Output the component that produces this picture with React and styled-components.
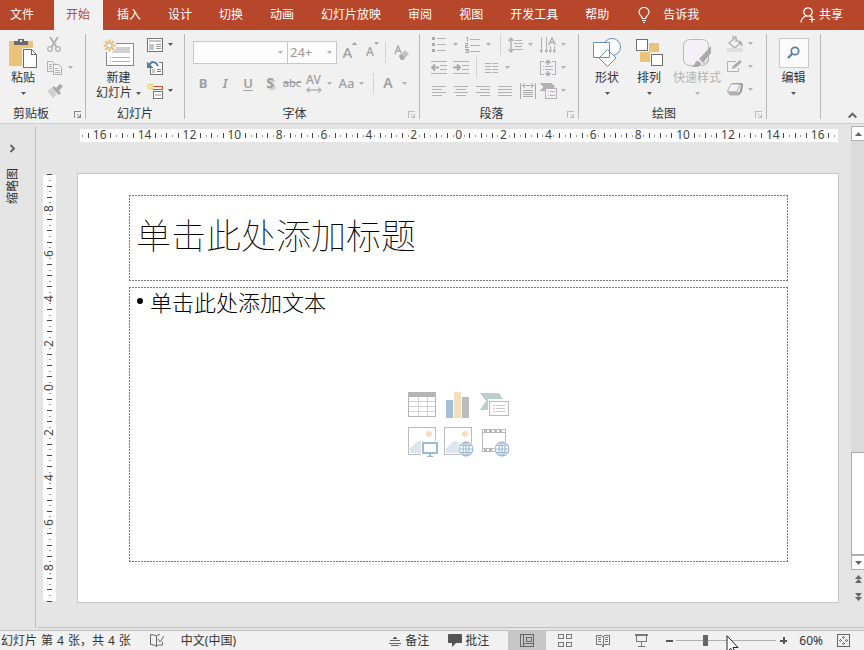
import React from "react";
import styled, { createGlobalStyle, css } from "styled-components";

const UI = `"Noto Sans", "Noto Sans CJK SC", sans-serif`;

const Global = createGlobalStyle`
  *, *::before, *::after { box-sizing: border-box; }
  body { margin: 0; background: #e5e5e5; font: 12px/16px ${UI}; color: #333; }
  button, input, select, textarea { font: inherit; color: inherit; margin: 0; }
  svg { display: block; flex: none; }
`;

const Window = styled.div`
  display: flex;
  flex-direction: column;
  height: 100vh;
  overflow: hidden;
`;

const PlainButton = styled.button`
  border: 0;
  padding: 0;
  background: none;
  white-space: nowrap;
`;

/* Tab strip */
const TabBar = styled.nav`
  display: flex;
  flex: none;
  height: 30px;
  background: #b7472a;
  color: #fff;
`;
const Tab = styled(PlainButton)`
  flex: none;
  padding: 0 14px 1px 13px;
  ${(p) => p.$file && css`padding: 0 20px 1px 10px;`}
  ${(p) => p.$active && css`
    padding: 0 13px 1px 12px;
    margin-right: 1px;
    background: #f1f1f1;
    color: #b7472a;
  `}
`;
const TabTool = styled(PlainButton)`
  display: flex;
  align-items: center;
  gap: ${(p) => p.$gap}px;
  margin-left: ${(p) => (p.$end ? "auto" : "15px")};
  margin-right: ${(p) => (p.$end ? "21px" : "0")};
`;

/* Ribbon */
const Ribbon = styled.div`
  display: flex;
  flex: none;
  height: 94px;
  border-bottom: 1px solid #d0d0d0;
  background: #f1f1f1;
`;
const Group = styled.section`
  position: relative;
  display: flex;
  flex-direction: column;
  flex: none;
  width: ${(p) => p.$w}px;
  padding-bottom: 1px;
  background: linear-gradient(#b9b9b9, #b9b9b9) right 4px / 1px 85px no-repeat;
`;
const GroupBody = styled.div`
  display: flex;
  flex: 1;
  padding-left: ${(p) => p.$pad || 0}px;
`;
const Caption = styled.div`
  height: 16px;
  text-align: center;
  padding-right: ${(p) => p.$shift || 16}px;
`;
const Launcher = styled(PlainButton)`
  position: absolute;
  right: 5px;
  bottom: 5px;
`;
const Big = styled(PlainButton)`
  display: flex;
  flex-direction: column;
  align-items: center;
  align-self: flex-start;
  width: ${(p) => p.$w}px;
  padding-top: 5px;
  color: ${(p) => (p.disabled ? "#b4b4b4" : "#333")};
`;
const BigIcon = styled.span`
  display: grid;
  place-items: center;
  height: 35px;
`;
const BigFoot = styled.span`
  display: flex;
  align-items: center;
  gap: 4px;
  height: 14px;
`;
const Rows = styled.div`
  display: flex;
  flex-direction: column;
  padding: ${(p) => p.$top || 3}px 0 0 ${(p) => p.$pad || 0}px;
`;
const Row = styled.div`
  display: flex;
  align-items: center;
  height: ${(p) => p.$h || 23}px;
`;
const Tool = styled(PlainButton)`
  display: flex;
  align-items: center;
  justify-content: ${(p) => (p.$left ? "flex-start" : "center")};
  gap: ${(p) => p.$gap || 5}px;
  width: ${(p) => p.$w}px;
  height: 22px;
  color: #a0a0a0;
`;
const Divider = styled.span`
  width: 1px;
  height: 21px;
  margin: 0 ${(p) => p.$r || 7}px 0 ${(p) => p.$l || 7}px;
  background: #d4d4d4;
`;
const Combo = styled.label`
  display: flex;
  position: relative;
  width: ${(p) => p.$w}px;
  height: 23px;
  & + & { margin-left: -1px; }
  svg { position: absolute; right: 5px; top: 10px; }
`;
const Select = styled.select`
  appearance: none;
  width: 100%;
  padding: 0 2px 1px;
  border: 1px solid #c6c6c6;
  border-radius: 0;
  background: #fdfdfd;
  color: #9a9a9a;
  font-size: 13px;
`;
const Glyph = styled.span`
  padding-bottom: 2px;
  font: ${(p) => p.$font || "600 13px/16px"} "Noto Sans", sans-serif;
  text-decoration: ${(p) => p.$deco || "none"};
  text-underline-offset: 2px;
  text-shadow: ${(p) => (p.$shadow ? "2px 2px 1px #c8c8c8" : "none")};
`;
const Stack = styled.span`
  display: flex;
  flex-direction: column;
  align-items: center;
`;
const Raised = styled.span`
  display: flex;
  align-items: flex-start;
`;
const SearchBox = styled.span`
  display: grid;
  place-items: center;
  width: 30px;
  height: 30px;
  border: 1px solid #c9c9c9;
  background: #fbfbfb;
`;
const Collapse = styled(PlainButton)`
  align-self: flex-end;
  margin: 0 7px 3px auto;
`;

/* Workspace */
const Workspace = styled.div`
  display: flex;
  flex: 1;
  min-height: 0;
  padding-top: 2px;
`;
const Thumbs = styled.aside`
  display: flex;
  flex-direction: column;
  align-items: center;
  flex: none;
  width: 36px;
  margin-bottom: 2px;
  padding: 18px 10px 0 0;
  border-right: 1px solid #bdbdbd;
`;
const SideText = styled.span`
  margin-top: 15px;
  writing-mode: vertical-rl;
  text-orientation: sideways;
  transform: rotate(180deg);
`;
const Editor = styled.main`
  display: flex;
  flex-direction: column;
  flex: 1;
  min-width: 0;
  margin: 0 0 2px 2px;
  padding: 3px 12px 24px 5px;
  border-bottom: 1px solid #c0c0c0;
`;
const HRuler = styled.div`
  display: flex;
  flex: none;
  height: 13px;
  margin: 0 1px 0 37px;
  background: #fff;
`;
const Stage = styled.div`
  display: flex;
  flex: 1;
  gap: 21px;
  min-height: 0;
  padding-top: 31px;
`;
const VRuler = styled.div`
  flex: none;
  width: 13px;
  margin: 2px 0;
  background: #fff;
`;
const VSlots = styled.div`
  display: flex;
  flex-direction: column;
  height: calc(100% + 6px);
  margin: -3px 0;
`;
const Slot = styled.span`
  display: flex;
  flex: 1 1 0;
  align-items: center;
  justify-content: center;
  min-width: 0;
  min-height: 0;
`;
const Tick = styled.i`
  flex: none;
  width: ${(p) => (p.$v ? (p.$small ? 2 : 5) : 1)}px;
  height: ${(p) => (p.$v ? 1 : p.$small ? 2 : 5)}px;
  background: ${(p) => (p.$small ? "#999" : "#444")};
`;
const Mark = styled.span`
  position: relative;
  z-index: 1;
  flex: none;
  padding-bottom: 2px;
  background: #fff;
  color: #444;
  line-height: 11px;
  transform: ${(p) => (p.$v ? "rotate(-90deg)" : "none")};
`;
const dash = (dir, pos, size) =>
  `repeating-linear-gradient(${dir}, #777 0 2px, transparent 2px 3px) ${pos} / ${size} no-repeat`;
const frame = [
  dash("90deg", "0 0", "100% 1px"),
  dash("90deg", "0 100%", "100% 1px"),
  dash("180deg", "0 0", "1px 100%"),
  dash("180deg", "100% 0", "1px 100%"),
].join(",");
const Slide = styled.article`
  display: flex;
  flex-direction: column;
  flex: 1;
  gap: 6px;
  min-width: 0;
  padding: 21px 50px 40px 51px;
  border: 1px solid #c6c6c6;
  background: #fff;
  color: #000;
`;
const Title = styled.h1`
  display: flex;
  align-items: center;
  flex: none;
  height: 86px;
  margin: 0;
  padding: 0 7px 8px;
  background: ${frame};
  font: 100 35px/48px "Noto Sans CJK SC", sans-serif;
`;
const Content = styled.div`
  display: grid;
  flex: 1;
  min-height: 0;
  background: ${frame};
`;
const Bullets = styled.ul`
  grid-area: 1 / 1;
  margin: 0;
  padding: 0 0 0 8px;
  list-style: none;
  font: 300 22px/28px "Noto Sans CJK SC", sans-serif;
`;
const Bullet = styled.li`
  display: flex;
  align-items: center;
  gap: 7px;
  &::before { content: ""; width: 6px; height: 6px; border-radius: 50%; background: #000; }
`;
const Inserts = styled.div`
  grid-area: 1 / 1;
  place-self: center;
  display: grid;
  grid-template-columns: repeat(3, 32px);
  gap: 5px 4px;
  padding-left: 2px;
`;

/* Scroll bar */
const Scroll = styled.div`
  display: flex;
  flex-direction: column;
  flex: none;
  width: 13px;
  margin-bottom: 2px;
  padding-bottom: 21px;
  border-bottom: 1px solid #c0c0c0;
`;
const ScrollButton = styled(PlainButton)`
  display: flex;
  align-items: center;
  justify-content: flex-end;
  flex: none;
  height: 15px;
  padding-right: 2px;
  border: 1px solid #b0b0b0;
  border-right: 0;
  background: #fff;
`;
const PageButton = styled(PlainButton)`
  display: flex;
  align-items: center;
  justify-content: flex-end;
  flex: none;
  height: 18px;
  padding-right: 2px;
`;
const Track = styled.div`
  display: flex;
  flex-direction: column;
  justify-content: flex-end;
  flex: 1;
  background: #dbdbdb;
`;
const Thumb = styled.div`
  height: 25%;
  border: 1px solid #ababab;
  border-right: 0;
  background: #fff;
`;

/* Status bar */
const Status = styled.footer`
  position: relative;
  display: flex;
  align-items: center;
  flex: none;
  height: 20px;
  padding: 0 14px 0 1px;
  border-top: 1px solid #c3c3c3;
  background: #f1f1f1;
  overflow: hidden;
`;
const Counter = styled.span`
  display: flex;
  gap: 4px;
`;
const Lang = styled.span`
  margin: 0 auto 0 19px;
`;
const StatusTool = styled(PlainButton)`
  display: flex;
  align-items: center;
  gap: ${(p) => p.$gap}px;
  margin-right: ${(p) => (p.$last ? 0 : 19)}px;
`;
const Views = styled.div`
  display: flex;
  margin: 0 6px 0 19px;
`;
const View = styled(PlainButton)`
  display: grid;
  place-items: center;
  width: 38px;
  height: 19px;
  background: ${(p) => (p.$on ? "#c6c6c6" : "none")};
`;
const Zoom = styled.input`
  appearance: none;
  width: 100px;
  height: 13px;
  margin: 0 4px 0 3px;
  background: linear-gradient(#b0b0b0, #b0b0b0) center / 100% 1px no-repeat;
  &::-webkit-slider-thumb {
    appearance: none;
    width: 5px;
    height: 11px;
    background: #666;
  }
`;
const Percent = styled.output`
  margin: 0 14px 0 12px;
`;
const Pointer = styled.span`
  position: absolute;
  right: 125px;
  top: 4px;
`;

/* Drawings */
const G = "#b2b2b2";
const D = "#6a6a6a";
const Svg = ({ w, h, c = G, f = "none", soft, children }) => (
  <svg width={w} height={h} viewBox={`0 0 ${w} ${h}`} fill={f} stroke={c}
    shapeRendering={soft ? "auto" : "crispEdges"} aria-hidden="true">{children}</svg>
);
const Down = ({ c = G }) => <Svg w={5} h={3} c="none" soft><path d="M0 0h5L2.5 3z" fill={c} /></Svg>;
const Dark = () => <Down c="#555" />;
const LaunchIcon = ({ c = "#bdbdbd" }) => (
  <Svg w={7} h={7} c={c}><path d="M.5 6.5v-6h6M3 3l3 3M6.5 3v3.500h-3.500" /></Svg>
);
const Bulb = () => (
  <Svg w={12} h={16} c="#fff" soft><path d="M4 11.500V10C2.500 8.500 1 7.500 1 5.200a5 4.700 0 0 1 10 0C11 7.500 9.500 8.500 8 10v1.500M4 11.500h4M4 13.500h4M5 15.500h2" strokeWidth="1.200" /></Svg>
);
const Share = () => (
  <Svg w={16} h={16} c="#fff" soft><circle cx="8" cy="5" r="4.200" strokeWidth="1.200" /><path d="M1 15.500c0-3 2-5 4.500-6.500M10.500 9l1 1M12 9.500v6M9 12.500h6" strokeWidth="1.200" /></Svg>
);
const Paste = () => (
  <Svg w={28} h={30} c="none">
    <path d="M0 3h24v25H0z" fill="#eac47a" /><path d="M5 7V3h4V1h6v2h4v4z" fill={D} /><path d="M11 2h2v2h-2z" fill="#f1f1f1" />
    <path d="M13 10h15v20H13z" fill="#f1f1f1" /><path d="M14.500 11.500h8l5 5v13h-13z" fill="#fff" stroke={D} /><path d="M22.500 11.500v5h5" stroke={D} />
  </Svg>
);
const Cut = () => (
  <Svg w={14} h={15} soft><path d="M3 0l6.500 10M11 0L4.500 10" strokeWidth="2" /><circle cx="3" cy="12" r="2.300" strokeWidth="1.300" /><circle cx="11" cy="12" r="2.300" strokeWidth="1.300" /></Svg>
);
const Copy = () => (
  <Svg w={15} h={14}><path d="M.5.5h5l2 2v8h-7zM2 3.500h3M2 5.500h3M2 7.500h3" /><path d="M6.500 3.500h5l3 3v7h-8z" fill="#f6f3f6" /><path d="M8 7.500h3M8 9.500h5M8 11.500h5" /></Svg>
);
const Brush = () => (
  <Svg w={16} h={14} c="none" soft><path d="M0 7l4-3 6 6-4 4z" fill="#cfcfcf" /><path d="M5 4l2-2 7 7-2 2zM9 4l4-4 3 2-4 5z" fill="#a9a9a9" /></Svg>
);
const Sun = ({ r = 6, x = 6, y = 6 }) => (
  <g stroke="#eac070" strokeWidth={r > 5 ? 2 : 1}><path shapeRendering="auto" d={`M${x} ${y - r}v${2 * r}M${x - r} ${y}h${2 * r}M${x - r * 0.7} ${y - r * 0.7}l${r * 1.4} ${r * 1.4}M${x + r * 0.7} ${y - r * 0.7}l${-r * 1.4} ${r * 1.4}`} /><circle cx={x} cy={y} r={r / 3} fill="#fff" stroke="none" /></g>
);
const NewSlide = () => (
  <Svg w={31} h={28}><rect x="3.500" y="4.500" width="27" height="22" rx="1" fill="#fff" stroke="#888" /><path d="M12 8h15v6H9z" fill="#d0d0d0" stroke="none" /><path d="M7 18.500h1M9 18.500h18M7 22.500h1M9 22.500h18" /><path d="M0 0h13v11H8l-2 2H0z" fill="#f1f1f1" stroke="none" /><Sun x={6.5} y={6.5} /></Svg>
);
const Layout = () => (
  <Svg w={16} h={14} c="#777"><path d="M.5.5h15v13H.5z" fill="#fff" /><path d="M2 2h12v2H2zM2 6h5v6H2z" fill="#c6c6c6" stroke="none" /><path d="M9 6.500h5M9 8.500h5M9 10.500h5" stroke="#999" /></Svg>
);
const Reset = () => (
  <Svg w={16} h={14} c="#777"><path d="M3.500 5.500V13.500h12V1.500H12" fill="#fff" /><path d="M5 8h3v4H5z" fill="#c6c6c6" stroke="none" /><path d="M10 8.500h4M10 10.500h4" /><path d="M11 5C9 0 4 0 2.500 4" stroke="#4f81ac" strokeWidth="2" shapeRendering="auto" /><path d="M0 1v6h6z" fill="#4f81ac" stroke="none" /></Svg>
);
const Section = () => (
  <Svg w={16} h={16} c="#777"><path d="M6 3.500h9.500v3H6" stroke="#c2533a" /><path d="M6.500 8.500h9v7h-9z" fill="#fff" /><path d="M8 11h6v2H8z" fill="#c6c6c6" stroke="none" /><Sun r={3.5} x={3.5} y={3.5} /></Svg>
);
const Eraser = () => (
  <Svg w={15} h={16} c="none" soft><path d="M1 9l3-8 3 7M2 6h4" stroke="#aaa" strokeWidth="1.500" /><path d="M5 11l6-6 4 4-6 6h-2z" fill="#c2c2c2" /><path d="M5 11l2-2 4 4-2 2H7z" fill="#aaa" /></Svg>
);
const Wide = () => <Svg w={16} h={6} soft><path d="M1 3h14M3.500.5L1 3l2.500 2.500M12.500.5L15 3l-2.500 2.500" strokeWidth="1.300" /></Svg>;
const Bulleted = () => <Svg w={14} h={15} c="none"><path d="M0 0h3v3H0zM0 6h3v3H0zM0 12h3v3H0z" fill="#aaa" /><path d="M5 1.500h9M5 7.500h9M5 13.500h9" stroke={G} /></Svg>;
const Numbered = () => (
  <Svg w={15} h={16}><path d="M1 .5h1v4M0 6.500h2.500v2H.5v2h3M0 12h3v3.500H0M1 13.500h2" stroke="#aaa" /><path d="M5 2.500h10M5 8.500h10M5 14.500h10" /></Svg>
);
const Spacing = () => <Svg w={15} h={16}><path d="M3 1v14M0.500 4L3 1l2.500 3M0.500 12L3 15l2.500-3" shapeRendering="auto" strokeWidth="1.500" /><path d="M7 3.500h7M6 6.500h9M7 9.500h7M6 12.500h9" /></Svg>;
const TextDir = () => <Svg w={16} h={16}><path d="M1.500 0v15M6.500 0v15M10.500 9v6M14.500 9v6M0 13l1.500 2L3 13M5 13l1.500 2L8 13M9 13l1.500 2 1.500-2M13 13l1.500 2 1-2" /><path d="M8.500 8L12 1l3.500 7M10 5.500h4" shapeRendering="auto" strokeWidth="1.500" /></Svg>;
const Indent = ({ right }) => (
  <Svg w={16} h={13}><path d="M0 .5h16M9 4.500h7M9 8.500h7M0 12.500h16" /><path d={right ? "M0 6.500h7M4 3.500l3 3-3 3" : "M1 6.500h7M4 3.500l-3 3 3 3"} strokeWidth="2" stroke="#aaa" shapeRendering="auto" /></Svg>
);
const Cols = () => <Svg w={13} h={10}><path d="M0 .5h6M7 .5h6M0 3.500h6M7 3.500h6M0 6.500h6M7 6.500h6M0 9.500h6M7 9.500h6" /></Svg>;
const AlignText = () => <Svg w={16} h={16}><path d="M4 1.500H.5v13H4M12 1.500h3.500v13H12" fill="#f6f0f8" /><path d="M3 6.500h1M5 6.500h8M3 9.500h1M5 9.500h8" /><path d="M8 0v5M5.500 3L8 .5 10.500 3M8 11v5M5.500 13L8 15.500l2.500-2.500" strokeWidth="1.500" stroke="#aaa" shapeRendering="auto" /></Svg>;
const Lines = ({ kind }) => {
  const d = {
    left: "M0 .5h14M0 3.500h10M0 6.500h14M0 9.500h10",
    center: "M0 .5h14M2 3.500h10M0 6.500h14M2 9.500h10",
    right: "M0 .5h14M4 3.500h10M0 6.500h14M4 9.500h10",
    justify: "M0 .5h14M0 3.500h14M0 6.500h14M0 9.500h14",
  }[kind];
  return <Svg w={14} h={10}><path d={d} /></Svg>;
};
const Distribute = () => <Svg w={16} h={16} c="#aaa"><path d="M.5 0v16M15.500 0v16M2 2.500h12M5 0L2.500 2.500 5 5M11 0l2.500 2.500L11 5M3 7.500h10M3 9.500h10M3 11.500h10M3 13.500h10" /></Svg>;
const SmartArt = () => <Svg w={17} h={16}><path d="M0 0h12l3 4-4 3-5 1-6 0 3-4z" fill={G} stroke="none" /><path d="M5.500 5.500h11v10h-11z" fill="#f6f0f8" /><path d="M8 8.500h1M10 8.500h5M8 12.500h1M10 12.500h5" /></Svg>;
const Shapes = () => <Svg w={30} h={30} c="#6b8fb3" soft><circle cx="20" cy="9" r="8.500" fill="#fff" /><path d="M1.500 4.500h16v15h-16zM15.500 11.500l8.500 8.500-8.500 8.500L7 20z" fill="#fff" /></Svg>;
const Arrange = () => <Svg w={27} h={27} c="#6e6e6e"><path d="M13 4h10v9h-9v10H4V13h9z" fill="#eac47a" stroke="none" /><path d="M.5.500h11v11H.5zM15.500 15.500h11v11h-11z" fill="#fff" /></Svg>;
const Quick = () => <Svg w={30} h={30} c="#aaa" soft><rect x="1.500" y="1.500" width="25" height="26" rx="6" fill="#f5f0f7" stroke="#b8b8b8" /><path d="M29 8v7l-8 10-4-4z" fill="#aaa" stroke="none" /><path d="M8 29c5-1 4-6 8-7l4 4c-2 4-7 4-12 3z" fill="#aaa" stroke="#f1f1f1" /><path d="M21 26q4-1 6-5" /></Svg>;
const Fill = () => <Svg w={16} h={16} soft><path d="M2 7l6-5 5 5-5 5zM6 4V0h3v6" strokeWidth="1.300" fill="none" /><path d="M12 5c3 0 4 2 3 6-1-2-2-3-3-3z" fill="#aaa" stroke="none" /><path d="M0 14h16" stroke="#e0e0e0" strokeWidth="4" /></Svg>;
const Outline = () => <Svg w={16} h={13} soft><path d="M9 1.500H.5v10h11V8" /><path d="M5 9l1-3 7-6 2 2-7 6z" fill="#aaa" stroke="none" /></Svg>;
const Effects = () => <Svg w={16} h={13} soft><path d="M5 1h9q1 0 1 1l-1 6-3 4" stroke="#999" strokeWidth="2" /><path d="M4 1h9l-3 8H1q-.8 0-.5-1z" fill="#f6f0f8" /><path d="M1 9h9l1 3H3z" fill={G} /></Svg>;
const Search = () => <Svg w={13} h={13} c="#557fa8" soft><circle cx="8" cy="5" r="3.700" strokeWidth="1.700" /><path d="M5.500 7.500L1 12" strokeWidth="2.200" /></Svg>;
const Chevron = ({ up }) => <Svg w={9} h={9} c="#666" soft><path d={up ? "M.7 6.500l3.800-3.800 3.800 3.800" : "M2.500 1l3.500 3.500L2.500 8"} strokeWidth="2" /></Svg>;
const Tri = ({ up, twice }) => (
  <svg width="7" height={twice ? 8 : 4} viewBox={twice ? "0 0 7 8" : "0 0 7 4"} fill="#666" aria-hidden="true">
    <path d={(up ? "M0 4h7L3.500 0z" : "M0 0h7L3.500 4z") + (twice ? (up ? "M0 8h7L3.500 4z" : "M0 4h7L3.500 8z") : "")} />
  </svg>
);
const Globe = ({ x, y }) => (
  <g transform={`translate(${x} ${y})`} stroke="#9dbbd6" shapeRendering="auto" strokeWidth="1.200"><circle cx="7" cy="7" r="8" fill="#fff" stroke="none" /><circle cx="7" cy="7" r="6.800" /><ellipse cx="7" cy="7" rx="3" ry="6.800" /><path d="M0 7h14M1.500 3.500h11M1.500 10.500h11M7 0v14" /></g>
);
const TableIcon = () => <Svg w={32} h={31} c="#d0d0d0"><path d="M10.500 5v20M19.500 5v20M1 10.500h27M1 15.500h27M1 20.500h27" /><path d="M.5 1.500h27v24H.5z" stroke="#b5b5b5" /><path d="M0 1h28v5H0z" fill="#b5b5b5" stroke="none" /></Svg>;
const ChartIcon = () => <Svg w={32} h={31} c="none"><path d="M2 9h7v18H2z" fill="#a5bfd9" /><path d="M10 1h7v26h-7z" fill="#f4dfbc" /><path d="M18 6h7v21h-7z" fill="#bcbcbc" /></Svg>;
const SmartIcon = () => <Svg w={32} h={31} c="#b9b9b9"><path d="M0 2h19l5 7H10v10H0l6-9z" fill="#b9d0cc" stroke="none" /><path d="M8 8h22v18H8z" fill="#fff" stroke="none" /><path d="M9.500 10.500h19v14h-19z" fill="#fff" /><path d="M13 14.500h2M16 14.500h9M13 17.500h2M16 17.500h9M13 20.500h2M16 20.500h9" stroke="#ccc" /></Svg>;
const Picture = ({ web }) => (
  <Svg w={32} h={31} c="#bcbcbc"><path d="M.5.500h27v27H.5z" fill="#fff" /><circle cx="21" cy="7" r="3" fill="#f4dfbc" stroke="none" shapeRendering="auto" /><path d="M2 26v-5l8-7h2l8 7v5z" fill="#dde6ed" stroke="none" />
    {web ? <Globe x={15} y={15} /> : <g><path d="M13 14h18v17H13z" fill="#fff" stroke="none" /><path d="M15 16h14v10H15zM22 26v3" stroke="#9dbbd6" strokeWidth="2" /><path d="M19 29.500h6" stroke="#9dbbd6" /></g>}
  </Svg>
);
const Video = () => <Svg w={32} h={31} c="#b9b9b9"><path d="M2.500 2.500h23v22h-23zM2 5.500h24M2 21.500h24" /><path d="M4 4h20M4 23h20" strokeWidth="2" strokeDasharray="3 2" /><Globe x={15} y={15} /></Svg>;
const Proof = () => <Svg w={14} h={13} c="#666" soft><path d="M6.500 12V2Q4 .5.500.5v10q4 0 6 2l2-1.500h4V8M6.500 2Q8 .5 10 .5M8 5l2 3 4-6" /></Svg>;
const Notes = () => <Svg w={12} h={11} c="#666"><path d="M3.500 4h5L6 1z" fill="#555" stroke="none" /><path d="M1 5.500h10M0 8.500h12M2 10.500h8" /></Svg>;
const Comment = () => <Svg w={14} h={13} c="none" soft><path d="M1 0h12q1 0 1 1v7q0 1-1 1H8l-4 4V9H1Q0 9 0 8V1q0-1 1-1z" fill="#555" /></Svg>;
const Normal = () => <Svg w={14} h={13} c="#666"><path d="M.5.500h13v12H.5zM3.500 1v11M6.500 3.500h5v4h-5zM4 9.500h9" /></Svg>;
const Sorter = () => <Svg w={14} h={13} c="#777"><path d="M.5.500h5v4h-5zM8.500.500h5v4h-5zM.5 8.500h5v4h-5zM8.500 8.500h5v4h-5z" /></Svg>;
const Reading = () => <Svg w={14} h={13} c="#777"><path d="M.5 1.500h5l1 1h1l1-1h5v9h-5l-1.500 2-1.500-2h-5zM7 2v10M2 3.500h3M2 5.500h3M2 7.500h3M9 3.500h3M9 5.500h3M9 7.500h3" /></Svg>;
const Show = () => <Svg w={13} h={13} c="#777"><path d="M0 1h13" strokeWidth="2" /><path d="M1.500 2v5.500h10V2M6.500 8v4M3 12.500h7" /></Svg>;
const Fit = () => <Svg w={13} h={13} c="#666"><path d="M.5.500h12v12H.5z" /><path d="M6.500 2v3M6.500 8v3M2 6.500h3M8 6.500h3M5 3.500h3M5 9.500h3M3.500 5v3M9.500 5v3" strokeDasharray="1 1" /></Svg>;
const Sign = ({ plus }) => <Svg w={7} h={7} c="#555"><path d={plus ? "M0 3.500h7M3.500 0v7" : "M0 3.500h7"} strokeWidth="2" /></Svg>;
const Arrow = () => <Svg w={13} h={20} c="#222" f="#fff" soft><path d="M1 .8v16l3.700-3.500 2.600 6 2.300-1-2.600-5.800H12z" /></Svg>;

const tabs = ["插入", "设计", "切换", "动画", "幻灯片放映", "审阅", "视图", "开发工具", "帮助"];

const slots = (count) => Array.from({ length: count }, (_, n) => n - (count - 1) / 2);
const Scale = ({ count, v }) =>
  slots(count).map((i) => (
    <Slot key={i}>
      {i % 8 === 0 ? <Mark $v={v}>{Math.abs(i) / 4}</Mark> : <Tick $v={v} $small={i % 2 !== 0} />}
    </Slot>
  ));

export default function App() {
  return (
    <Window>
      <Global />
      <TabBar>
        <Tab $file>文件</Tab>
        <Tab $active>开始</Tab>
        {tabs.map((t) => <Tab key={t}>{t}</Tab>)}
        <TabTool $gap={13}><Bulb />告诉我</TabTool>
        <TabTool $gap={3} $end><Share />共享</TabTool>
      </TabBar>

      <Ribbon>
        <Group $w={86}>
          <GroupBody $pad={2}>
            <Big $w={42}><BigIcon><Paste /></BigIcon>粘贴<BigFoot><Dark /></BigFoot></Big>
            <Rows $pad={3}>
              <Row><Tool $left $w={28} aria-label="剪切"><Cut /></Tool></Row>
              <Row><Tool $left $w={28} $gap={6} aria-label="复制"><Copy /><Down /></Tool></Row>
              <Row><Tool $left $w={28} aria-label="格式刷"><Brush /></Tool></Row>
            </Rows>
          </GroupBody>
          <Caption $shift={24}>剪贴板</Caption>
          <Launcher aria-label="剪贴板选项"><LaunchIcon c="#888" /></Launcher>
        </Group>

        <Group $w={99}>
          <GroupBody $pad={9}>
            <Big $w={47}><BigIcon><NewSlide /></BigIcon>新建<BigFoot>幻灯片<Dark /></BigFoot></Big>
            <Rows $pad={5}>
              <Row><Tool $left $w={28} aria-label="版式"><Layout /><Dark /></Tool></Row>
              <Row><Tool $left $w={28} aria-label="重置"><Reset /></Tool></Row>
              <Row><Tool $left $w={28} aria-label="节"><Section /><Dark /></Tool></Row>
            </Rows>
          </GroupBody>
          <Caption $shift={1}>幻灯片</Caption>
        </Group>

        <Group $w={235}>
          <GroupBody>
            <Rows $pad={8} $top={7}>
              <Row $h={31}>
                <Combo $w={95}><Select aria-label="字体"><option> </option></Select><Down /></Combo>
                <Combo $w={50}><Select aria-label="字号"><option>24+</option></Select><Down /></Combo>
                <Tool $w={26}><Raised><Glyph $font="500 15px/20px">A</Glyph><Svg w={5} h={3} c="none"><path d="M0 3h5L2.500 0z" fill="#aaa" /></Svg></Raised></Tool>
                <Tool $w={19}><Raised><Glyph $font="500 12px/20px">A</Glyph><Down c="#aaa" /></Raised></Tool>
                <Divider $l={3} $r={5} />
                <Tool $w={20} aria-label="清除格式"><Eraser /></Tool>
              </Row>
              <Row $h={31}>
                <Tool $w={20}><Glyph $font="700 13px/16px">B</Glyph></Tool>
                <Tool $w={24}><Glyph $font="italic 600 13px/16px">I</Glyph></Tool>
                <Tool $w={22}><Glyph $deco="underline">U</Glyph></Tool>
                <Tool $w={22}><Glyph $shadow $font="700 14px/16px">S</Glyph></Tool>
                <Tool $w={22}><Glyph $font="500 11px/16px" $deco="line-through">abc</Glyph></Tool>
                <Tool $w={31} $gap={5}><Stack><Glyph $font="500 12px/10px">AV</Glyph><Wide /></Stack><Down /></Tool>
                <Tool $w={35}><Glyph $font="500 13px/16px">Aa</Glyph><Down /></Tool>
                <Divider $l={4} $r={7} />
                <Tool $w={28} $gap={9}><Glyph $font="600 14px/16px">A</Glyph><Down /></Tool>
              </Row>
            </Rows>
          </GroupBody>
          <Caption>字体</Caption>
          <Launcher aria-label="字体选项"><LaunchIcon /></Launcher>
        </Group>

        <Group $w={159}>
          <GroupBody $pad={8}>
            <Rows>
              <Row>
                <Tool $gap={7} $w={34} aria-label="项目符号"><Bulleted /><Down /></Tool>
                <Tool $gap={6} $w={32} aria-label="编号"><Numbered /><Down /></Tool>
                <Divider $l={6} $r={7} />
                <Tool $left $w={32} aria-label="行距"><Spacing /><Down /></Tool>
                <Tool $left $w={28} aria-label="文字方向"><TextDir /><Down /></Tool>
              </Row>
              <Row>
                <Tool $w={22} aria-label="减少缩进"><Indent /></Tool>
                <Tool $w={22} aria-label="增加缩进"><Indent right /></Tool>
                <Divider $l={4} $r={8} />
                <Tool $left $gap={7} $w={55} aria-label="分栏"><Cols /><Down /></Tool>
                <Tool $left $w={28} aria-label="对齐文本"><AlignText /><Down /></Tool>
              </Row>
              <Row>
                <Tool $w={22} aria-label="左对齐"><Lines kind="left" /></Tool>
                <Tool $w={22} aria-label="居中"><Lines kind="center" /></Tool>
                <Tool $w={22} aria-label="右对齐"><Lines kind="right" /></Tool>
                <Tool $w={22} aria-label="两端对齐"><Lines kind="justify" /></Tool>
                <Tool $w={24} aria-label="分散对齐"><Distribute /></Tool>
                <Tool $left $w={28} $gap={4} aria-label="SmartArt"><SmartArt /><Down /></Tool>
              </Row>
            </Rows>
          </GroupBody>
          <Caption>段落</Caption>
          <Launcher aria-label="段落选项"><LaunchIcon /></Launcher>
        </Group>

        <Group $w={188}>
          <GroupBody $pad={7}>
            <Big $w={42}><BigIcon><Shapes /></BigIcon>形状<BigFoot><Dark /></BigFoot></Big>
            <Big $w={42}><BigIcon><Arrange /></BigIcon>排列<BigFoot><Dark /></BigFoot></Big>
            <Big $w={54} disabled><BigIcon><Quick /></BigIcon>快速样式<BigFoot><Down /></BigFoot></Big>
            <Rows $pad={3} $top={2}>
              <Row><Tool $left $w={28} aria-label="形状填充"><Fill /><Down /></Tool></Row>
              <Row><Tool $left $w={28} aria-label="形状轮廓"><Outline /><Down /></Tool></Row>
              <Row><Tool $left $w={28} aria-label="形状效果"><Effects /><Down /></Tool></Row>
            </Rows>
          </GroupBody>
          <Caption $shift={18}>绘图</Caption>
          <Launcher aria-label="绘图选项"><LaunchIcon /></Launcher>
        </Group>

        <Group $w={54}>
          <Big $w={53}><BigIcon><SearchBox><Search /></SearchBox></BigIcon>编辑<BigFoot><Dark /></BigFoot></Big>
        </Group>
        <Collapse aria-label="折叠功能区"><Chevron up /></Collapse>
      </Ribbon>

      <Workspace>
        <Thumbs>
          <PlainButton aria-label="展开缩略图"><Chevron /></PlainButton>
          <SideText>缩略图</SideText>
        </Thumbs>
        <Editor>
          <HRuler><Scale count={135} /></HRuler>
          <Stage>
            <VRuler><VSlots><Scale count={77} v /></VSlots></VRuler>
            <Slide>
              <Title>单击此处添加标题</Title>
              <Content>
                <Bullets><Bullet>单击此处添加文本</Bullet></Bullets>
                <Inserts>
                  <PlainButton aria-label="插入表格"><TableIcon /></PlainButton>
                  <PlainButton aria-label="插入图表"><ChartIcon /></PlainButton>
                  <PlainButton aria-label="插入 SmartArt"><SmartIcon /></PlainButton>
                  <PlainButton aria-label="图片"><Picture /></PlainButton>
                  <PlainButton aria-label="联机图片"><Picture web /></PlainButton>
                  <PlainButton aria-label="插入视频"><Video /></PlainButton>
                </Inserts>
              </Content>
            </Slide>
          </Stage>
        </Editor>
        <Scroll>
          <ScrollButton aria-label="向上"><Tri up /></ScrollButton>
          <Track><Thumb /></Track>
          <ScrollButton aria-label="向下"><Tri /></ScrollButton>
          <PageButton aria-label="上一张"><Tri up twice /></PageButton>
          <PageButton aria-label="下一张"><Tri twice /></PageButton>
        </Scroll>
      </Workspace>

      <Status>
        <Counter><span>幻灯片</span><span>第</span><span>4</span><span>张，共</span><span>4</span><span>张</span></Counter>
        <Lang><StatusTool $last $gap={17}><Proof />中文(中国)</StatusTool></Lang>
        <StatusTool $gap={4}><Notes />备注</StatusTool>
        <StatusTool $last $gap={3}><Comment />批注</StatusTool>
        <Views>
          <View $on aria-label="普通视图"><Normal /></View>
          <View aria-label="幻灯片浏览"><Sorter /></View>
          <View aria-label="阅读视图"><Reading /></View>
          <View aria-label="幻灯片放映"><Show /></View>
        </Views>
        <PlainButton aria-label="缩小"><Sign /></PlainButton>
        <Zoom type="range" min="0" max="100" defaultValue="28" aria-label="缩放" />
        <PlainButton aria-label="放大"><Sign plus /></PlainButton>
        <Percent>60%</Percent>
        <PlainButton aria-label="适应窗口"><Fit /></PlainButton>
        <Pointer><Arrow /></Pointer>
      </Status>
    </Window>
  );
}
